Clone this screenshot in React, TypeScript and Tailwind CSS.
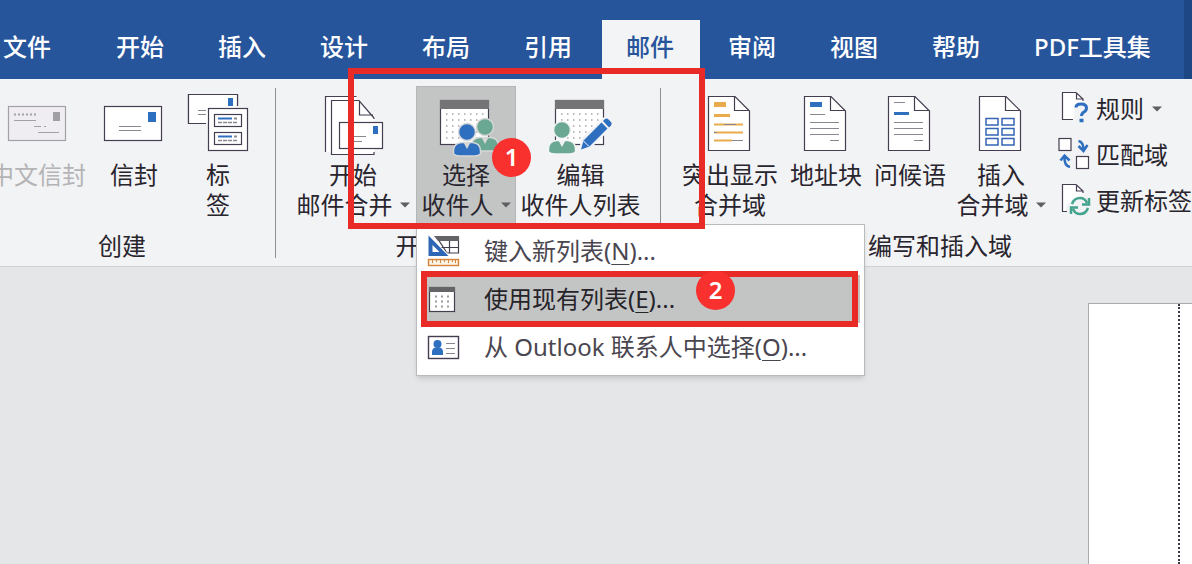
import type { ReactNode } from "react";

const INK = "#453d50";
const BLUE = "#2f6fc0";
const GREEN = "#6aa893";

function Big({ children }: { children: ReactNode }) {
  return (
    <svg width="64" height="68" viewBox="0 0 64 68" fill="none" className="mt-1 mb-0.5 shrink-0 overflow-visible" aria-hidden="true">
      {children}
    </svg>
  );
}

function Small({ children }: { children: ReactNode }) {
  return (
    <svg width="34" height="36" viewBox="0 0 34 36" fill="none" className="shrink-0 overflow-visible" aria-hidden="true">
      {children}
    </svg>
  );
}

function Arrow() {
  return (
    <svg width="10" height="6" viewBox="0 0 10 6" className="shrink-0" aria-hidden="true">
      <path d="M0 0.5h10L5 5.5z" fill="#5f5f63" />
    </svg>
  );
}

function ChineseEnvelopeIcon() {
  return (
    <Big>
      <rect x="2.5" y="16.5" width="57" height="34" fill="#efedf1" stroke="#a3a0a6" strokeWidth="1.2" />
      <rect x="47" y="22" width="7" height="9" fill="#a29fa4" />
      <path d="M8 24.5h23" stroke="#a3a0a6" strokeWidth="2" strokeDasharray="2 2" />
      <path d="M8 30.5h22M28 36.5h7M38 36.5h2M32 42.5h21" stroke="#a3a0a6" />
    </Big>
  );
}

function EnvelopeIcon() {
  return (
    <Big>
      <rect x="2.5" y="16.5" width="57" height="34" fill="#fff" stroke={INK} strokeWidth="1.2" />
      <rect x="46" y="22" width="8" height="10" fill={BLUE} />
      <path d="M17 36.5h22M17 40.5h22" stroke="#8b8791" />
    </Big>
  );
}

function LabelsIcon() {
  return (
    <Big>
      <path d="M20 33.5H2.5v-29h49V16" fill="#fff" stroke={INK} strokeWidth="1.2" />
      <path d="M20 33.500V16h31.500V4.500H2.500v29z" fill="#fff" />
      <path d="M20 33.500H2.500v-29h49V16" stroke={INK} strokeWidth="1.2" />
      <rect x="42" y="8" width="5" height="8" fill={BLUE} />
      <path d="M12 20.5h8M12 24.5h8" stroke="#8b8791" />
      <rect x="22.5" y="18.5" width="39" height="42" fill="#fff" stroke={INK} strokeWidth="1.2" />
      {[24.5, 42.5].map((y) => (
        <g key={y}>
          <rect x="28.5" y={y} width="27" height="12" fill="#fff" stroke={INK} strokeWidth="1.2" />
          <path d={`M32 ${y + 4}h14`} stroke={BLUE} strokeWidth="2" />
          <path d={`M48 ${y + 4}h3`} stroke="#8b8791" strokeWidth="2" />
          <path d={`M32 ${y + 8}h19`} stroke="#8b8791" strokeWidth="1.5" strokeDasharray="4 1" />
        </g>
      ))}
    </Big>
  );
}

function MergeIcon() {
  return (
    <Big>
      <path d="M4.5 62V6.5h31v4h-25V62z" fill="#fff" />
      <path d="M4.5 62V6.5h31" stroke={INK} strokeWidth="1.2" />
      <path d="M10.5 10.5H38L53 27v37.500H10.500z" fill="#fff" />
      <path d="M53 28v1M53 62v2.5H10.500v-54H38L53 28M38.500 11v14H52" stroke={INK} strokeWidth="1.2" />
      <rect x="18.5" y="32.5" width="43" height="26" fill="#fff" stroke={INK} strokeWidth="1.2" />
      <rect x="52" y="36" width="5" height="8" fill={BLUE} />
      <path d="M32 46.5h13M32 51.500h9" stroke="#8b8791" />
    </Big>
  );
}

function Calendar({ x }: { x: number }) {
  return (
    <g>
      <rect x={x + 0.5} y="10.5" width="48" height="44" fill="#fff" stroke={INK} strokeWidth="1.2" />
      <rect x={x} y="10" width="49" height="9" fill="#747476" />
      {[24, 30, 36, 42, 48].map((y) => (
        <path key={y} d={`M${x + 6} ${y}h40`} stroke="#a5a5a9" strokeWidth="1.5" strokeDasharray="1.5 4.5" />
      ))}
    </g>
  );
}

function Person({ x, y, color, halo }: { x: number; y: number; color: string; halo: string }) {
  return (
    <g transform={`translate(${x} ${y})`}>
      <path d="M-13.500 22v-3c0-5 3-8 8-8.500h11c5 .5 8 3.500 8 8.500v3q-2 2-6 2h-15q-4 0-6-2z" fill={color} stroke={halo} strokeWidth="1.5" />
      <circle r="8.500" fill={color} stroke={halo} strokeWidth="1.5" />
      <path d="M-3.500 10.500h7L0 17z" fill={halo} />
    </g>
  );
}

function SelectIcon() {
  return (
    <Big>
      <Calendar x={6} />
      <Person x={51} y={37} color={GREEN} halo="#d6d8d8" />
      <Person x={33} y={42} color={BLUE} halo="#d6d8d8" />
    </Big>
  );
}

function EditIcon() {
  return (
    <Big>
      <Calendar x={6} />
      <Person x={13} y={40} color={GREEN} halo="#f2f3f4" />
      <path d="M29 62l4-14 22-21 10 9-22 21z" fill="#f2f3f4" />
      <path d="M32 59.500l2.500-9 18-18 6 6-18 18z" fill={BLUE} />
      <path d="M54 31l2-2q2-1 3.500.5l2.500 2.500q1.500 1.500 0 3.500l-2 2z" fill={BLUE} />
      <path d="M34.500 51l5.500 5.500" stroke="#fff" />
    </Big>
  );
}

function Sheet({ children }: { children: ReactNode }) {
  return (
    <Big>
      <path d="M10.5 6.5H37L51.5 21v39.500h-41z" fill="#fff" stroke={INK} strokeWidth="1.2" />
      <path d="M36.500 6.500v14h15" stroke={INK} strokeWidth="1.2" />
      {children}
    </Big>
  );
}

function HighlightIcon() {
  return (
    <Sheet>
      <path d="M16 14.5h12" stroke="#e9ab4c" strokeWidth="5" />
      <path d="M16 25.500h16" stroke="#e9ab4c" strokeWidth="3" />
      <path d="M16 34.500h29M16 42.500h29M16 50.500h18" stroke="#e9ab4c" strokeWidth="2" />
      <path d="M26 34.500h12M16 42.500h3M34 50.500h11" stroke="#8b8791" />
    </Sheet>
  );
}

function AddressIcon() {
  return (
    <Sheet>
      <path d="M16 14.5h12" stroke={BLUE} strokeWidth="5" />
      <path d="M16 24.5h15M16 32.5h29M16 38.5h29M16 44.5h29M36 50.5h9" stroke="#8b8791" />
    </Sheet>
  );
}

function GreetingIcon() {
  return (
    <Sheet>
      <path d="M16 23.500h15" stroke={BLUE} strokeWidth="3" />
      <path d="M16 12.5h11M16 32.5h29M16 38.5h29M16 44.5h29M36 50.5h9" stroke="#8b8791" />
    </Sheet>
  );
}

function InsertFieldIcon() {
  return (
    <Sheet>
      {[28.5, 38.5, 48.5].map((y) => (
        <path key={y} d={`M17 ${y}h12v6.500h-12zM33 ${y}h12v6.500h-12z`} stroke="#3565b5" strokeWidth="1.5" />
      ))}
    </Sheet>
  );
}

function RulesIcon() {
  return (
    <Small>
      <path d="M16 28.500H4.500v-27H18L25 8v4l-9 2z" fill="#fff" />
      <path d="M15 28.500H4.500v-27H18L25 8v2M18.500 2v6H25" stroke={INK} strokeWidth="1.2" />
      <path d="M18 16.500q0-3.500 5-3.500 5.500 0 5.500 4 0 2.500-2.500 4-2.500 1.500-2.500 4" stroke={BLUE} strokeWidth="3" />
      <path d="M21.500 29.500h4" stroke={BLUE} strokeWidth="3.500" />
    </Small>
  );
}

function MatchIcon() {
  return (
    <Small>
      <rect x="1" y="1.500" width="12" height="12" fill="#fff" stroke={INK} strokeWidth="1.2" />
      <rect x="18.500" y="19.500" width="12" height="12" fill="#fff" stroke={INK} strokeWidth="1.2" />
      <path d="M20.500 4q5 1 5 9M20.500 9l5 5 4-6" stroke={BLUE} strokeWidth="2.500" />
      <path d="M12 30q-6-1-5.500-11M2.500 23.500l4-5 5 5" stroke={BLUE} strokeWidth="2.500" />
    </Small>
  );
}

function UpdateIcon() {
  return (
    <Small>
      <path d="M8 28.500H4.500v-27H18L25 8v4L8 22z" fill="#fff" />
      <path d="M9 28.500H4.500v-27H18L25 8v2M18.500 2v6H25" stroke={INK} strokeWidth="1.2" />
      <path d="M14 21q2-6 8-6 5 0 7 5M31 15v6.500h-7M30 25q-2 6-8 6-5 0-7-5M13 31v-6.500h7" stroke="#45a48f" strokeWidth="2.500" />
    </Small>
  );
}

function NewListIcon() {
  return (
    <svg width="34" height="34" viewBox="0 0 34 34" fill="none" className="shrink-0" aria-hidden="true">
      <path d="M10 3.500h21.500V19H20z" fill="#fff" stroke={INK} strokeWidth="1.2" />
      <path d="M7 2h25v5H11z" fill="#646466" />
      <path d="M22.500 7v12M14 13.500h18" stroke={INK} strokeWidth="1.2" />
      <path d="M1 0v23h23z" fill="#fff" />
      <path fillRule="evenodd" d="M1.500 1.500v20.500h20zM5.500 11v7h7z" fill="#2c66b5" />
      <rect x="1.500" y="25.500" width="30" height="6" fill="#fdf3e3" stroke="#d6833c" strokeWidth="1.400" />
      <path d="M5.500 26v3M9.500 26v2M13.500 26v3M17.500 26v2M21.500 26v3M25.500 26v2M28.500 26v3" stroke="#d6833c" />
    </svg>
  );
}

function ExistingListIcon() {
  return (
    <svg width="34" height="34" viewBox="0 0 34 34" fill="none" className="shrink-0" aria-hidden="true">
      <rect x="2.500" y="5.500" width="25" height="24" fill="#fff" stroke={INK} strokeWidth="1.200" />
      <path d="M2 7.500h26" stroke="#646466" strokeWidth="5" />
      <path d="M8 14.500h16M8 19.500h16M8 24.500h16" stroke="#9a9a9f" strokeWidth="2" strokeDasharray="2 4" />
    </svg>
  );
}

function ContactsIcon() {
  return (
    <svg width="34" height="34" viewBox="0 0 34 34" fill="none" className="shrink-0" aria-hidden="true">
      <rect x="1.500" y="6.500" width="30" height="22" fill="#fff" stroke={INK} strokeWidth="1.400" />
      <circle cx="10.500" cy="14" r="4" fill={BLUE} />
      <path d="M5 25v-3q0-4 3.500-4.500h4q3.500.5 3.500 4.500v3z" fill={BLUE} />
      <path d="M19 13.500h9M19 18.500h9M19 23.500h9" stroke="#8b8791" />
    </svg>
  );
}

type ToolProps = { icon: ReactNode; lines: string[]; arrow?: boolean; disabled?: boolean; active?: boolean; className: string };

function Tool({ icon, lines, arrow, disabled, active, className }: ToolProps) {
  return (
    <button
      type="button"
      disabled={disabled}
      aria-haspopup={arrow ? "menu" : undefined}
      aria-expanded={arrow ? !!active : undefined}
      className={`flex h-[138px] shrink-0 flex-col items-center whitespace-nowrap ${active ? "bg-[#c3c5c5] ring-1 ring-[#b4b6b7] ring-inset" : ""} ${disabled ? "text-[#b4b3b6]" : ""} ${className}`}
    >
      {icon}
      {lines.map((line, i) => (
        <span key={line} className="flex items-center gap-[7px] leading-[30px]">
          {line}
          {arrow && i === lines.length - 1 && <Arrow />}
        </span>
      ))}
    </button>
  );
}

function Group({ name, className, children }: { name: string; className: string; children: ReactNode }) {
  return (
    <section aria-label={name} className={`flex shrink-0 flex-col ${className}`}>
      <div className="flex">{children}</div>
      <h2 className="mt-[7px] mb-px text-center leading-[30px]">{name}</h2>
    </section>
  );
}

function Divider() {
  return <div className="mt-0.5 mb-1 w-px shrink-0 bg-[#8f8f94]" />;
}

function SideTool({ icon, label, arrow }: { icon: ReactNode; label: string; arrow?: boolean }) {
  return (
    <button type="button" className="flex h-[46px] items-center gap-1 whitespace-nowrap">
      {icon}
      <span>{label}</span>
      {arrow && <span className="ml-1"><Arrow /></span>}
    </button>
  );
}

function MenuRow({ icon, label, hotkey, active }: { icon: ReactNode; label: string; hotkey: string; active?: boolean }) {
  return (
    <button
      type="button"
      role="menuitem"
      className={`flex h-12 items-center gap-[23px] whitespace-nowrap pl-1.5 text-left ${active ? "bg-[#c3c5c5] text-[#262329]" : "text-[#4a4650]"}`}
    >
      {icon}
      <span>
        {label}(<u className="decoration-1 underline-offset-4">{hotkey}</u>)...
      </span>
    </button>
  );
}

function Badge({ n, className }: { n: number; className: string }) {
  return (
    <span className={`absolute z-30 flex size-[39px] items-center justify-center rounded-full bg-[#f8312f] pb-0.5 font-semibold text-white ${className}`}>
      {n}
    </span>
  );
}

const tabs = ["开始", "插入", "设计", "布局", "引用", "邮件", "审阅", "视图", "帮助", "PDF工具集"];

export default function App() {
  return (
    <div className="relative flex min-h-screen flex-col overflow-hidden bg-[#e5e6e8] font-['Noto_Sans','Noto_Sans_CJK_SC',sans-serif] text-2xl leading-[30px] text-[#29252e]">
      <header className="flex justify-between bg-[#26559c]">
        <nav className="flex gap-1 pt-5 text-white" aria-label="功能区">
          <button type="button" className="h-[59px] w-[88px] shrink-0 pb-1.5 pl-[3px] text-left font-medium">文件</button>
          {tabs.map((t) => (
            <button
              key={t}
              type="button"
              aria-current={t === "邮件" ? "page" : undefined}
              className={`h-[59px] shrink-0 pr-[26px] pb-1.5 pl-6 font-medium whitespace-nowrap ${t === "邮件" ? "bg-[#f3f4f5] text-[#26559c]" : ""}`}
            >
              {t}
            </button>
          ))}
        </nav>
        <div className="w-2 shrink-0 bg-[#1d4785]" />
      </header>

      <div className="flex border-b border-[#cfd1d3] bg-[#f2f3f4] pt-[7px] pb-1">
        <Group name="创建" className="-ml-2.5 mr-[21px]">
          <Tool className="w-24" icon={<ChineseEnvelopeIcon />} lines={["中文信封"]} disabled />
          <Tool className="w-24" icon={<EnvelopeIcon />} lines={["信封"]} />
          <Tool className="w-[72px]" icon={<LabelsIcon />} lines={["标", "签"]} />
        </Group>
        <Divider />
        <Group name="开始邮件合并" className="mr-[15px] ml-3.5">
          <Tool className="w-[126px]" icon={<MergeIcon />} lines={["开始", "邮件合并"]} arrow />
          <div className="relative">
            <Tool className="w-[100px]" icon={<SelectIcon />} lines={["选择", "收件人"]} arrow active />
            <Badge n={1} className="top-[52px] left-[76px]" />
            <div role="menu" className="absolute top-full left-0 z-10 flex w-[449px] flex-col border border-[#b9bbbd] bg-white px-1 pt-0.5 pb-1 shadow-md">
              <MenuRow icon={<NewListIcon />} label="键入新列表" hotkey="N" />
              <div className="relative flex flex-col">
                <MenuRow icon={<ExistingListIcon />} label="使用现有列表" hotkey="E" active />
                <div className="pointer-events-none absolute -inset-y-1 right-0.5 left-0 border-[6px] border-[#e92b28]" />
                <Badge n={2} className="-top-1 left-[275px]" />
              </div>
              <MenuRow icon={<ContactsIcon />} label="从 Outlook 联系人中选择" hotkey="O" />
            </div>
          </div>
          <Tool className="w-[129px]" icon={<EditIcon />} lines={["编辑", "收件人列表"]} />
        </Group>
        <Divider />
        <Group name="编写和插入域" className="ml-[17px]">
          <Tool className="w-[104px]" icon={<HighlightIcon />} lines={["突出显示", "合并域"]} />
          <Tool className="w-[88px]" icon={<AddressIcon />} lines={["地址块"]} />
          <Tool className="w-20" icon={<GreetingIcon />} lines={["问候语"]} />
          <Tool className="w-[102px]" icon={<InsertFieldIcon />} lines={["插入", "合并域"]} arrow />
          <div className="ml-1.5 flex w-36 flex-col">
            <SideTool icon={<RulesIcon />} label="规则" arrow />
            <SideTool icon={<MatchIcon />} label="匹配域" />
            <SideTool icon={<UpdateIcon />} label="更新标签" />
          </div>
        </Group>
      </div>

      <div className="pointer-events-none absolute top-[68px] left-[348px] z-20 h-[161px] w-[357px] border-[6px] border-[#e92b28]" />

      <main className="flex flex-1 justify-end pt-9">
        <article className="flex w-[104px] justify-end border-t border-l border-[#a9abae] bg-white">
          <div className="w-3.5 border-l-2 border-dotted border-[#3c3a48]" />
        </article>
      </main>
    </div>
  );
}
